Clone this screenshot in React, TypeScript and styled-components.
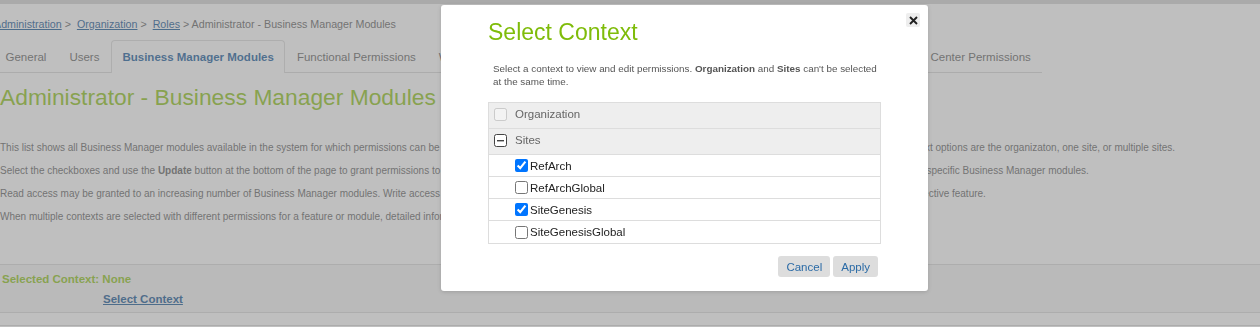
import React from 'react';
import styled, { createGlobalStyle } from 'styled-components';

const GlobalStyle = createGlobalStyle`
  html, body {
    margin: 0;
    padding: 0;
    background: #fff;
    overflow: hidden;
    font-family: "Liberation Sans", Arial, sans-serif;
  }
`;

const Page = styled.div`
  margin-left: -6px;
  width: 1266px;
`;

const TopStrip = styled.div`
  height: 4px;
  background: #d4d4d4;
`;

const Breadcrumb = styled.div`
  padding-top: 13px;
  font-size: 10.7px;
  line-height: 14px;
  color: #666;
  white-space: nowrap;
`;

const CrumbLink = styled.a`
  color: #1a5a96;
  text-decoration: underline;
`;

const TabBar = styled.div`
  display: inline-flex;
  margin-top: 9px;
  border-bottom: 1px solid #d8d8d8;
`;

const Tab = styled.div<{ $active?: boolean }>`
  height: 33px;
  box-sizing: border-box;
  line-height: 32px;
  padding: 0 10.5px;
  font-size: 11.5px;
  white-space: nowrap;
  color: ${(p) => (p.$active ? '#1d5f9e' : '#666')};
  font-weight: ${(p) => (p.$active ? 'bold' : 'normal')};
  background: ${(p) => (p.$active ? '#fff' : 'transparent')};
  border: 1px solid ${(p) => (p.$active ? '#dcdcdc' : 'transparent')};
  border-bottom: none;
  border-radius: 4px 4px 0 0;
  margin-bottom: -1px;
`;

const PageTitle = styled.h1`
  margin: 10px 0 0 6px;
  font-size: 22.8px;
  line-height: 28px;
  font-weight: normal;
  color: #90c41c;
  white-space: nowrap;
`;

const Intro = styled.div`
  display: flex;
  flex-direction: column;
  gap: 10px;
  margin-top: 30px;
  padding-left: 6px;
`;

const IntroLine = styled.p`
  margin: 0;
  font-size: 10px;
  line-height: 13px;
  color: #666;
  white-space: nowrap;
`;

const ContextBand = styled.div`
  margin-top: 41px;
  padding: 7px 0 6px 8px;
  background: #f4f4f4;
  border-top: 1px solid #dadada;
  border-bottom: 1px solid #dadada;
  font-size: 11.5px;
  line-height: 14px;
  font-weight: bold;
`;

const SelectedLabel = styled.div`
  color: #90c41c;
`;

const SelectLink = styled.a`
  display: inline-block;
  margin: 6px 0 0 101px;
  color: #1a5a96;
  text-decoration: underline;
`;

const PageFoot = styled.div`
  height: 12px;
  border-bottom: 1px solid #d8d8d8;
`;

const Overlay = styled.div`
  position: fixed;
  inset: 0;
  background: rgba(128, 128, 128, 0.5);
`;

const Modal = styled.div`
  position: fixed;
  left: 441px;
  top: 5px;
  width: 487px;
  height: 286px;
  box-sizing: border-box;
  padding: 0 47px;
  background: #fff;
  border-radius: 3px;
  box-shadow: 0 1px 4px rgba(0, 0, 0, 0.15);
  display: flex;
  flex-direction: column;
`;

const CloseButton = styled.button`
  position: absolute;
  top: 8px;
  right: 8px;
  width: 14px;
  height: 14px;
  padding: 0;
  border: none;
  border-radius: 2px;
  background: #eee;
  display: flex;
  align-items: center;
  justify-content: center;
  cursor: pointer;
`;

const ModalTitle = styled.h2`
  margin: 13px 0 0;
  font-size: 23px;
  line-height: 28px;
  font-weight: normal;
  color: #7fbc0a;
`;

const ModalText = styled.p`
  margin: 16px 0 0;
  padding: 0 5px;
  font-size: 9.85px;
  line-height: 13px;
  color: #555;
  white-space: nowrap;
`;

const ContextTable = styled.div`
  margin-top: 14px;
  border: 1px solid #ddd;
`;

const GroupRow = styled.div`
  display: flex;
  align-items: center;
  height: 26px;
  box-sizing: border-box;
  padding: 0 0 3px 5px;
  background: #eee;
  border-bottom: 1px solid #ddd;
  font-size: 11.5px;
  color: #666;
`;

const SiteRow = styled.label<{ $last?: boolean }>`
  display: flex;
  align-items: center;
  height: 22px;
  box-sizing: border-box;
  padding-left: 26px;
  border-bottom: ${(p) => (p.$last ? 'none' : '1px solid #ddd')};
  font-size: 11.5px;
  color: #222;
`;

const Check = styled.input`
  width: 13px;
  height: 13px;
  margin: 0;
`;

const GroupLabel = styled.span`
  margin-left: 8px;
`;

const SiteLabel = styled.span`
  margin-left: 2px;
`;

const Actions = styled.div`
  display: flex;
  justify-content: flex-end;
  gap: 3px;
  margin-top: 12px;
  padding-right: 3px;
`;

const ActionButton = styled.button`
  height: 21px;
  padding: 0 8px;
  border: none;
  border-radius: 3px;
  background: #ddd;
  color: #2b6ba6;
  font-family: "Liberation Sans", Arial, sans-serif;
  font-size: 11.5px;
  cursor: pointer;
`;

const tabs = [
  'General',
  'Users',
  'Business Manager Modules',
  'Functional Permissions',
  'WebDAV Permissions',
  'Locale Permissions',
  'Storefront Permissions',
  'Customer Service Center Permissions',
];

const sites = [
  { name: 'RefArch', checked: true },
  { name: 'RefArchGlobal', checked: false },
  { name: 'SiteGenesis', checked: true },
  { name: 'SiteGenesisGlobal', checked: false },
];

function MinusBox() {
  return (
    <svg width="13" height="13" viewBox="0 0 13 13">
      <rect x="0.5" y="0.5" width="12" height="12" rx="2" fill="#fff" stroke="#444" />
      <rect x="3" y="6" width="7" height="1.4" fill="#444" />
    </svg>
  );
}

export default function App(): React.ReactElement {
  return (
    <>
      <GlobalStyle />
      <Page>
        <TopStrip />
        <Breadcrumb>
          <CrumbLink>Administration</CrumbLink>&nbsp;&gt;&nbsp; <CrumbLink>Organization</CrumbLink>&nbsp;&gt;&nbsp;{' '}
          <CrumbLink>Roles</CrumbLink> &gt; Administrator - Business Manager Modules
        </Breadcrumb>
        <TabBar>
          {tabs.map((t) => (
            <Tab key={t} $active={t === 'Business Manager Modules'}>
              {t}
            </Tab>
          ))}
        </TabBar>
        <PageTitle>Administrator - Business Manager Modules</PageTitle>
        <Intro>
          <IntroLine>
            This list shows all Business Manager modules available in the system for which permissions can be granted to this role. Permissions are always granted in relation to a currently selected context. Possible context options are the organizaton, one site, or multiple sites.
          </IntroLine>
          <IntroLine>
            Select the checkboxes and use the <b>Update</b> button at the bottom of the page to grant permissions to certain modules. Read and write permissions can be granted separately, and may be assigned individually to specific Business Manager modules.
          </IntroLine>
          <IntroLine>
            Read access may be granted to an increasing number of Business Manager modules. Write access in these modules also requires additional functional permissions, which must likewise be granted for the respective feature.
          </IntroLine>
          <IntroLine>
            When multiple contexts are selected with different permissions for a feature or module, detailed information is displayed in the module list.
          </IntroLine>
        </Intro>
        <ContextBand>
          <SelectedLabel>Selected Context: None</SelectedLabel>
          <SelectLink>Select Context</SelectLink>
        </ContextBand>
        <PageFoot />
      </Page>

      <Overlay />
      <Modal>
        <CloseButton aria-label="Close">
          <svg width="9" height="9" viewBox="0 0 9 9">
            <path d="M1 1 L8 8 M8 1 L1 8" stroke="#222" strokeWidth="1.9" />
          </svg>
        </CloseButton>
        <ModalTitle>Select Context</ModalTitle>
        <ModalText>
          Select a context to view and edit permissions. <b>Organization</b> and <b>Sites</b> can't be selected
          <br />
          at the same time.
        </ModalText>
        <ContextTable>
          <GroupRow>
            <Check type="checkbox" disabled />
            <GroupLabel>Organization</GroupLabel>
          </GroupRow>
          <GroupRow>
            <MinusBox />
            <GroupLabel>Sites</GroupLabel>
          </GroupRow>
          {sites.map((s, i) => (
            <SiteRow key={s.name} $last={i === sites.length - 1}>
              <Check type="checkbox" defaultChecked={s.checked} />
              <SiteLabel>{s.name}</SiteLabel>
            </SiteRow>
          ))}
        </ContextTable>
        <Actions>
          <ActionButton>Cancel</ActionButton>
          <ActionButton>Apply</ActionButton>
        </Actions>
      </Modal>
    </>
  );
}
